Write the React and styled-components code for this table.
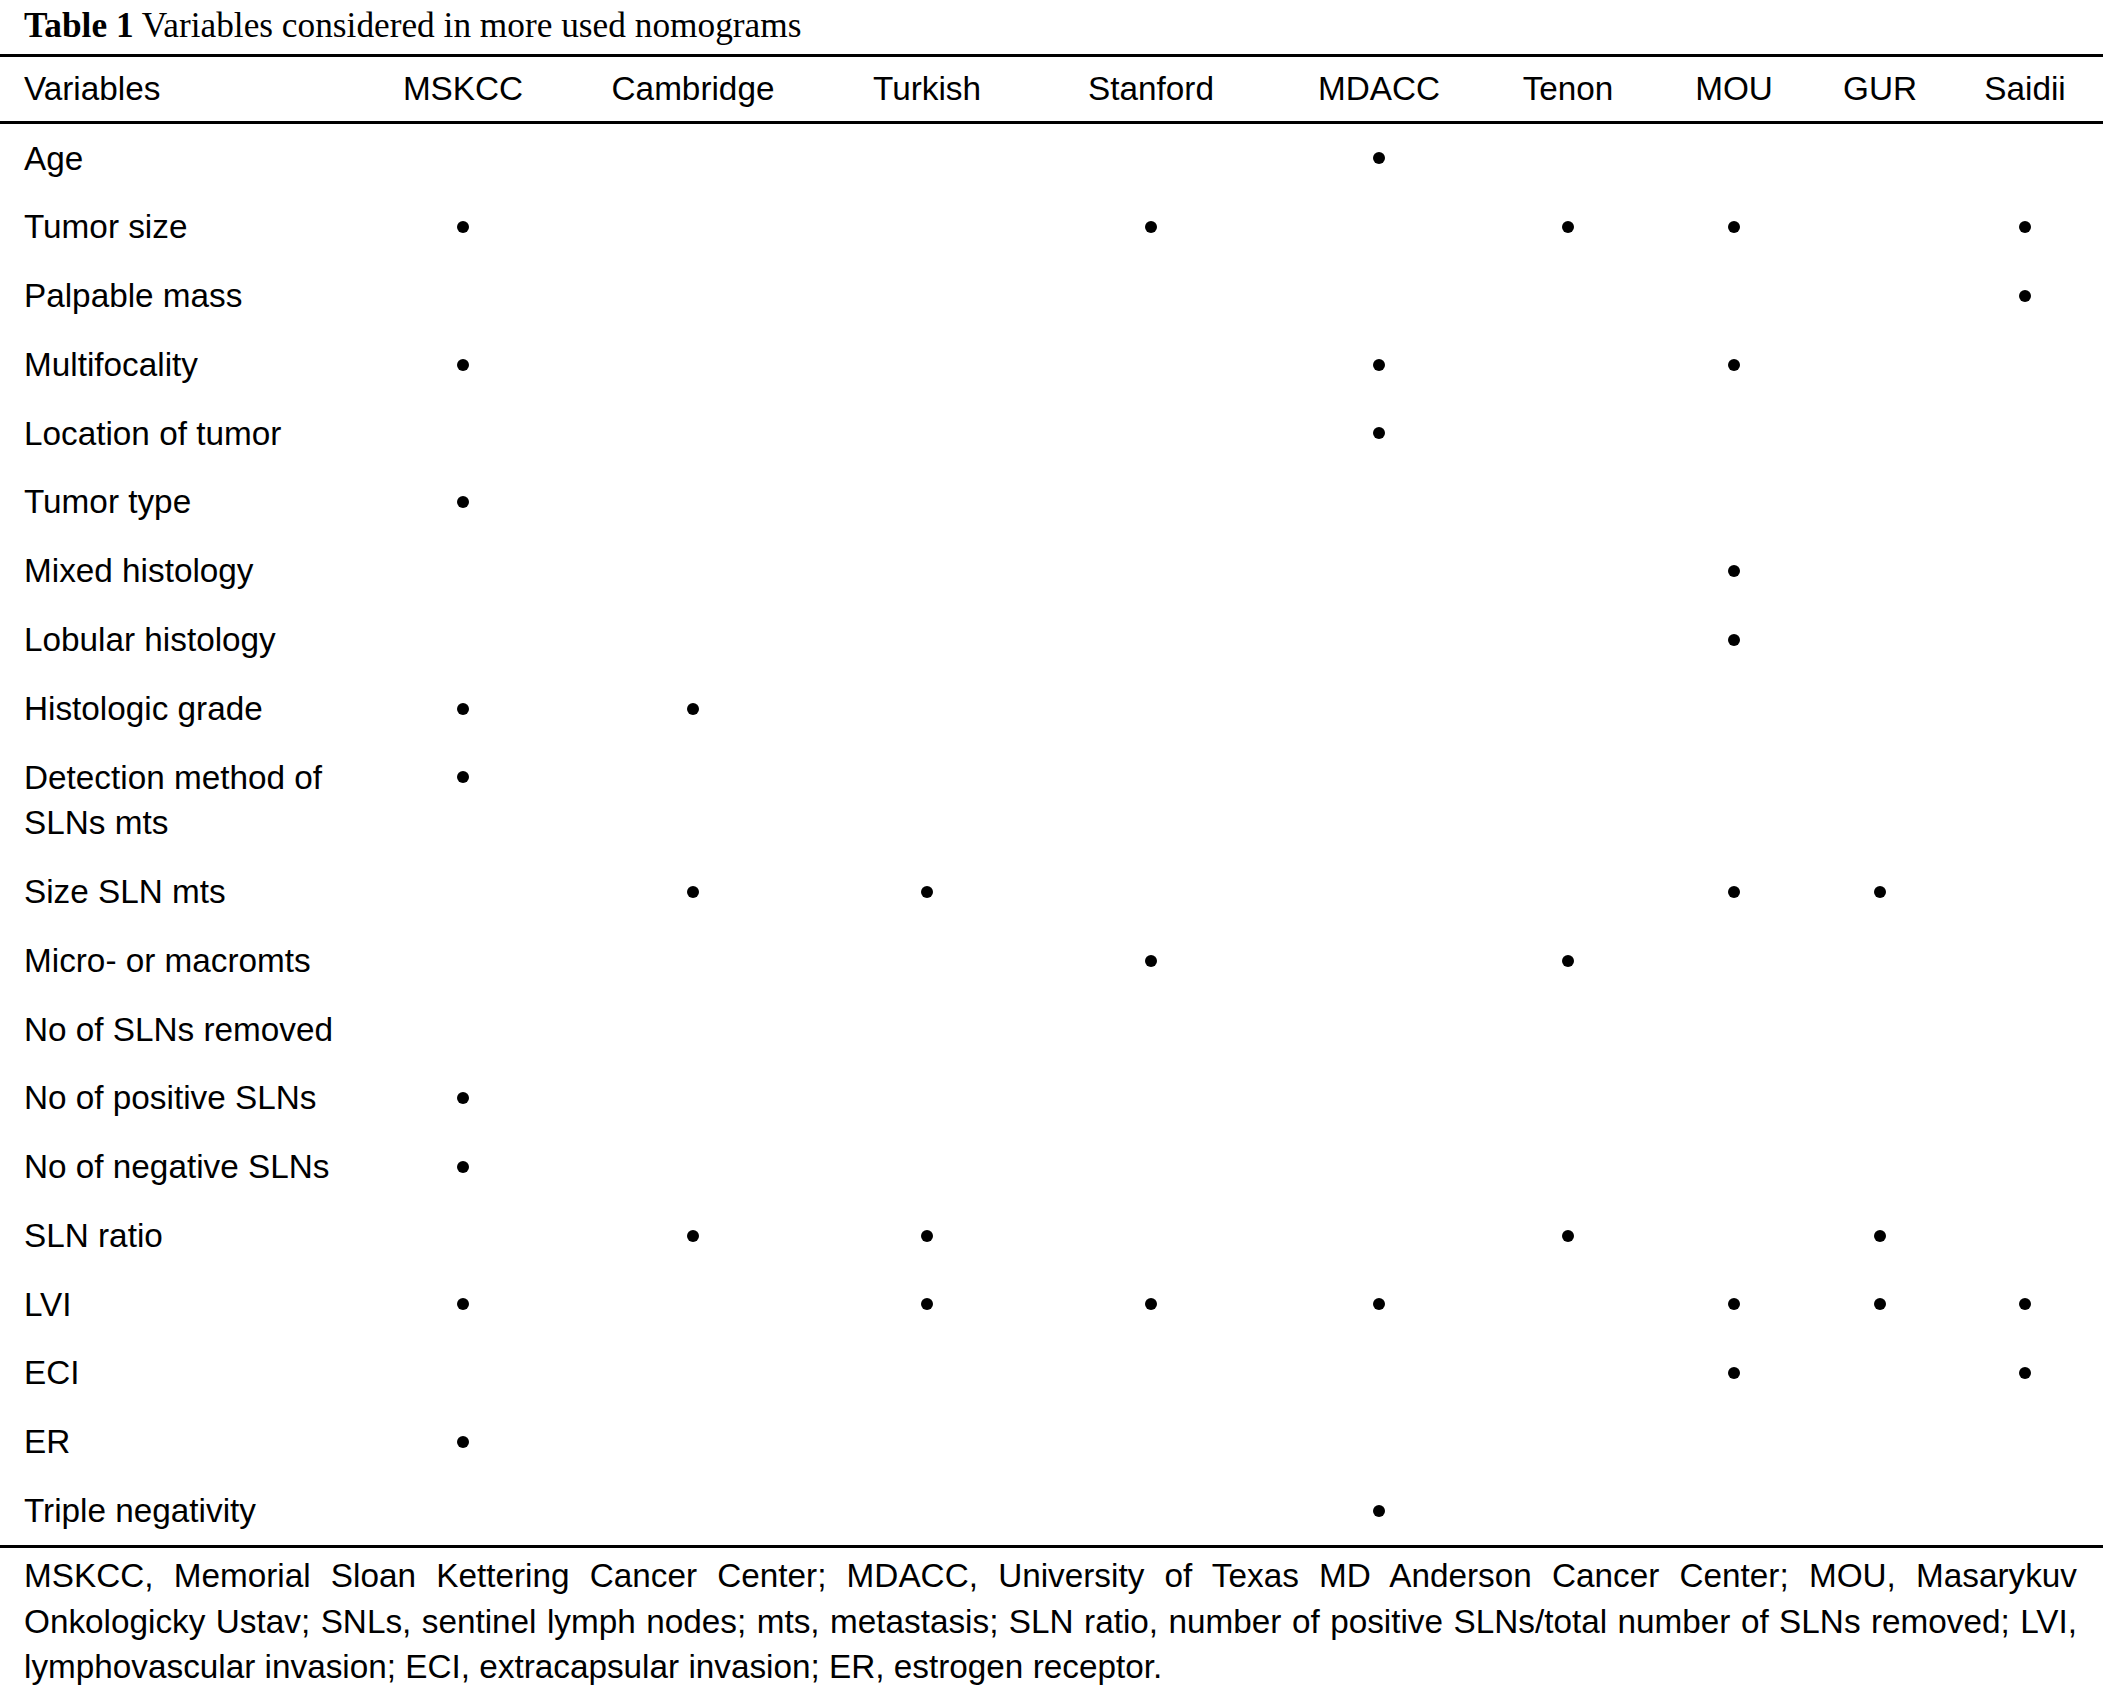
import React from "react";
import styled, { createGlobalStyle } from "styled-components";

const GlobalStyle = createGlobalStyle`
  html, body {
    margin: 0;
    padding: 0;
    background: #ffffff;
    overflow: hidden;
  }
`;

const COLS = "348px 230px 230px 238px 210px 246px 132px 200px 92px 177px";

const Page = styled.div`
  width: 2103px;
  background: #ffffff;
  color: #000000;
`;

const Title = styled.h1`
  margin: 0 0 8px;
  padding: 5px 24px 0;
  font-family: "Liberation Serif", "Times New Roman", serif;
  font-size: 35.3px;
  line-height: 41px;
  font-weight: 400;
  color: #000000;
  white-space: nowrap;
`;

const TitleLabel = styled.strong`
  font-weight: 700;
`;

const Table = styled.div`
  border-top: 3px solid #000000;
  border-bottom: 3px solid #000000;
  font-family: "Liberation Sans", Arial, Helvetica, sans-serif;
  font-size: 33.3px;
  line-height: 45.6px;
`;

const Row = styled.div`
  display: grid;
  grid-template-columns: ${COLS};
  padding: ${(p) => (p.$head ? "9.2px 0" : "11.6px 0")};
  border-bottom: ${(p) => (p.$head ? "3px solid #000000" : "none")};
`;

const HeadCell = styled.div`
  text-align: ${(p) => (p.$left ? "left" : "center")};
  padding-left: ${(p) => (p.$left ? "24px" : "0")};
  white-space: nowrap;
  &:last-child {
    padding-left: 21px;
  }
`;

const LabelCell = styled.div`
  padding: 0 8px 0 24px;
`;

const DotCell = styled.div`
  height: 45.6px;
  display: flex;
  align-items: center;
  justify-content: center;
  &:last-child {
    padding-left: 21px;
  }
`;

const Dot = styled.span`
  width: 12px;
  height: 12px;
  border-radius: 50%;
  background: #000000;
`;

const Footnote = styled.div`
  padding: 5px 26px 0 24px;
  font-family: "Liberation Sans", Arial, Helvetica, sans-serif;
  font-size: 33.3px;
  line-height: 45.6px;
`;

const FootLine = styled.div`
  text-align: ${(p) => (p.$justify ? "justify" : "left")};
  text-align-last: ${(p) => (p.$justify ? "justify" : "auto")};
`;

const HEADERS = ["MSKCC", "Cambridge", "Turkish", "Stanford", "MDACC", "Tenon", "MOU", "GUR", "Saidii"];

const ROWS = [
  ["Age", ["MDACC"]],
  ["Tumor size", ["MSKCC", "Stanford", "Tenon", "MOU", "Saidii"]],
  ["Palpable mass", ["Saidii"]],
  ["Multifocality", ["MSKCC", "MDACC", "MOU"]],
  ["Location of tumor", ["MDACC"]],
  ["Tumor type", ["MSKCC"]],
  ["Mixed histology", ["MOU"]],
  ["Lobular histology", ["MOU"]],
  ["Histologic grade", ["MSKCC", "Cambridge"]],
  ["Detection method of SLNs mts", ["MSKCC"]],
  ["Size SLN mts", ["Cambridge", "Turkish", "MOU", "GUR"]],
  ["Micro- or macromts", ["Stanford", "Tenon"]],
  ["No of SLNs removed", []],
  ["No of positive SLNs", ["MSKCC"]],
  ["No of negative SLNs", ["MSKCC"]],
  ["SLN ratio", ["Cambridge", "Turkish", "Tenon", "GUR"]],
  ["LVI", ["MSKCC", "Turkish", "Stanford", "MDACC", "MOU", "GUR", "Saidii"]],
  ["ECI", ["MOU", "Saidii"]],
  ["ER", ["MSKCC"]],
  ["Triple negativity", ["MDACC"]],
];

export default function App() {
  return (
    <Page>
      <GlobalStyle />
      <Title>
        <TitleLabel>Table 1</TitleLabel> Variables considered in more used nomograms
      </Title>
      <Table>
        <Row $head>
          <HeadCell $left>Variables</HeadCell>
          {HEADERS.map((h) => (
            <HeadCell key={h}>{h}</HeadCell>
          ))}
        </Row>
        {ROWS.map(([label, marks]) => (
          <Row key={label}>
            <LabelCell>{label}</LabelCell>
            {HEADERS.map((h) => (
              <DotCell key={h}>{marks.includes(h) ? <Dot /> : null}</DotCell>
            ))}
          </Row>
        ))}
      </Table>
      <Footnote>
        <FootLine $justify>
          MSKCC, Memorial Sloan Kettering Cancer Center; MDACC, University of Texas MD Anderson Cancer Center; MOU, Masarykuv
        </FootLine>
        <FootLine $justify>
          Onkologicky Ustav; SNLs, sentinel lymph nodes; mts, metastasis; SLN ratio, number of positive SLNs/total number of SLNs removed; LVI,
        </FootLine>
        <FootLine>
          lymphovascular invasion; ECI, extracapsular invasion; ER, estrogen receptor.
        </FootLine>
      </Footnote>
    </Page>
  );
}
